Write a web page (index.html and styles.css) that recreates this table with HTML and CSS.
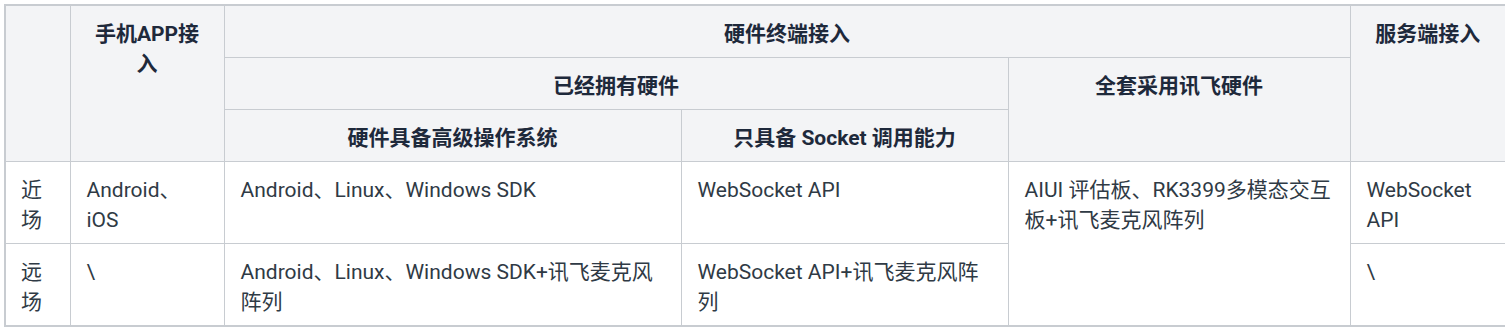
FILE: index.html
```html
<!DOCTYPE html>
<html lang="zh-CN">
<head>
<meta charset="utf-8">
<title>接入方式</title>
<link rel="stylesheet" href="styles.css">
</head>
<body>
<table class="access-table">
  <colgroup>
    <col class="c-scene">
    <col class="c-app">
    <col class="c-os">
    <col class="c-socket">
    <col class="c-full">
    <col class="c-server">
  </colgroup>
  <thead>
    <tr>
      <th rowspan="3"></th>
      <th rowspan="3">手机APP接入</th>
      <th colspan="3">硬件终端接入</th>
      <th rowspan="3">服务端接入</th>
    </tr>
    <tr>
      <th colspan="2">已经拥有硬件</th>
      <th rowspan="2">全套采用讯飞硬件</th>
    </tr>
    <tr>
      <th>硬件具备高级操作系统</th>
      <th>只具备 Socket 调用能力</th>
    </tr>
  </thead>
  <tbody>
    <tr>
      <td>近场</td>
      <td>Android、iOS</td>
      <td>Android、Linux、Windows SDK</td>
      <td>WebSocket API</td>
      <td rowspan="2">AIUI 评估板、RK3399多模态交互板+讯飞麦克风阵列</td>
      <td>WebSocket API</td>
    </tr>
    <tr>
      <td>远场</td>
      <td>\</td>
      <td>Android、Linux、Windows SDK+讯飞麦克风阵列</td>
      <td>WebSocket API+讯飞麦克风阵列</td>
      <td>\</td>
    </tr>
  </tbody>
</table>
</body>
</html>
```
FILE: styles.css
```css
html, body {
  background: #ffffff;
}
body {
  margin: 4px 6px 4px 4px;
  font-family: Roboto, "Noto Sans CJK SC", sans-serif;
  font-size: 21px;
  line-height: 30px;
  color: #2c3e50;
}
.access-table {
  width: 100%;
  table-layout: fixed;
  border-collapse: collapse;
  border: 2px solid #c8ccd1;
}
.c-scene { width: 65px; }
.c-app { width: 154px; }
.c-os { width: 457px; }
.c-socket { width: 327px; }
.c-full { width: 342px; }
.c-server { width: 156px; }
.access-table th,
.access-table td {
  border: 1px solid #c8ccd1;
  padding: 13px 16px 8px;
  vertical-align: top;
  word-break: break-word;
}
.access-table th {
  background: #f3f4f6;
  font-weight: 700;
  color: #1e293b;
  text-align: center;
}
.access-table td {
  background: #ffffff;
  text-align: left;
  color: #2f3a45;
}
.access-table td:first-child {
  padding-left: 15px;
  padding-right: 14px;
}
```
